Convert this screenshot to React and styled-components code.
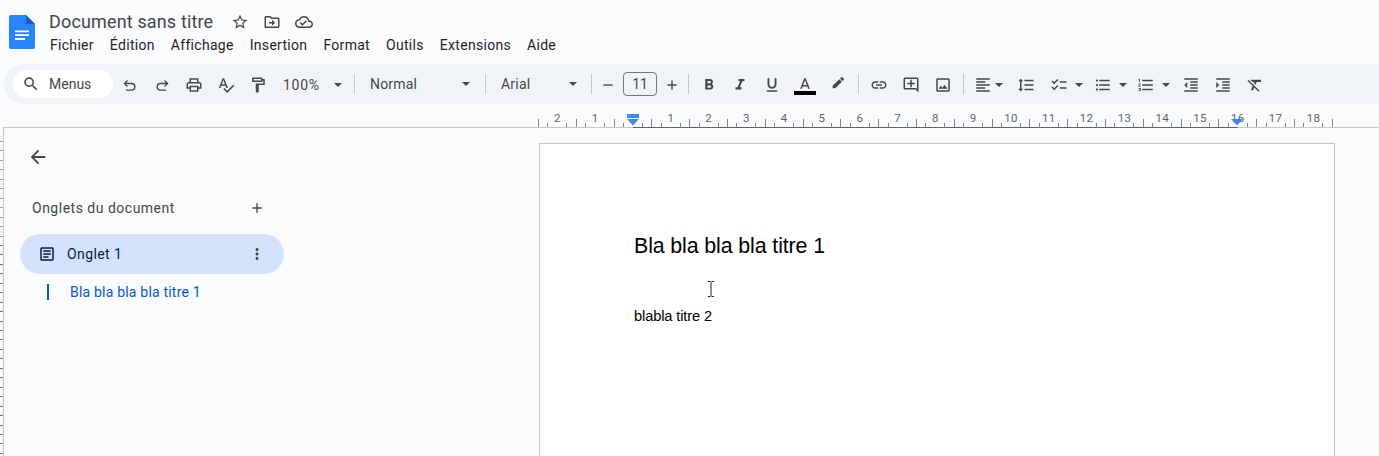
import React from 'react';
import styled, { createGlobalStyle } from 'styled-components';

const GlobalStyle = createGlobalStyle`
  html, body {
    margin: 0;
    padding: 0;
    background: #f9fbfd;
    overflow: hidden;
  }
  * { box-sizing: border-box; }
`;

const ICONS = {
  search: 'M15.5 14h-.79l-.28-.27A6.471 6.471 0 0 0 16 9.5 6.5 6.5 0 1 0 9.5 16c1.61 0 3.09-.59 4.23-1.57l.27.28v.79l5 4.99L20.49 19l-4.99-5zm-6 0C7.01 14 5 11.99 5 9.5S7.01 5 9.5 5 14 7.01 14 9.5 11.99 14 9.5 14z',
  print: 'M19 8h-1V3H6v5H5c-1.66 0-3 1.34-3 3v6h4v4h12v-4h4v-6c0-1.66-1.34-3-3-3zM8 5h8v3H8V5zm8 12v2H8v-4h8v2zm2-2v-2H6v2H4v-4c0-.55.45-1 1-1h14c.55 0 1 .45 1 1v4h-2z',
  spell: 'M12.45 16h2.09L9.43 3H7.57L2.46 16h2.09l1.12-3h5.64l1.14 3zm-6.02-5L8.5 5.48 10.57 11H6.43zm15.16.59l-8.09 8.09L9.83 16l-1.41 1.41 5.09 5.09L23 13l-1.41-1.41z',
  paint: 'M18 4V3c0-.55-.45-1-1-1H5c-.55 0-1 .45-1 1v4c0 .55.45 1 1 1h12c.55 0 1-.45 1-1V6h1v4H9v11c0 .55.45 1 1 1h2c.55 0 1-.45 1-1v-9h8V4h-3zm-2 2H6V4h10v2z',
  star: 'M22 9.24l-7.19-.62L12 2 9.19 8.63 2 9.24l5.46 4.73L5.82 21 12 17.27 18.18 21l-1.63-7.03L22 9.24zM12 15.4l-3.76 2.27 1-4.28-3.32-2.88 4.38-.38L12 6.1l1.71 4.04 4.38.38-3.32 2.88 1 4.28L12 15.4z',
  move: 'M20 6h-8l-2-2H4c-1.1 0-1.99.9-1.99 2L2 18c0 1.1.9 2 2 2h16c1.1 0 2-.9 2-2V8c0-1.1-.9-2-2-2zm0 12H4V6h5.17l2 2H20v10zm-8-4H8v-2h4V9l4 4-4 4v-3z',
  cloud: 'M19.35 10.04C18.67 6.59 15.64 4 12 4 9.11 4 6.6 5.64 5.35 8.04 2.34 8.36 0 10.91 0 14c0 3.31 2.69 6 6 6h13c2.76 0 5-2.24 5-5 0-2.64-2.05-4.78-4.65-4.96zM19 18H6c-2.21 0-4-1.79-4-4 0-2.05 1.53-3.76 3.56-3.97l1.07-.11.5-.95C8.08 7.14 9.94 6 12 6c2.62 0 4.88 1.86 5.39 4.43l.3 1.5 1.53.11c1.56.1 2.78 1.41 2.78 2.96 0 1.65-1.35 3-3 3zm-9-3.82l-2.09-2.09L6.5 13.5 10 17l6.01-6.01-1.41-1.41z',
  bold: 'M15.6 10.79c.97-.67 1.65-1.77 1.65-2.79 0-2.26-1.75-4-4-4H7v14h7.04c2.09 0 3.71-1.7 3.71-3.79 0-1.52-.86-2.82-2.15-3.42zM10 6.5h3c.83 0 1.5.67 1.5 1.5s-.67 1.5-1.5 1.5h-3v-3zm3.5 9H10v-3h3.5c.83 0 1.5.67 1.5 1.5s-.67 1.5-1.5 1.5z',
  italic: 'M10 4v3h2.21l-3.42 8H6v3h8v-3h-2.21l3.42-8H18V4z',
  underline: 'M12 17c3.31 0 6-2.69 6-6V3h-2.5v8c0 1.93-1.57 3.5-3.5 3.5S8.5 12.93 8.5 11V3H6v8c0 3.31 2.69 6 6 6zm-7 2v2h14v-2H5z',
  textColor: 'M11 3L5.5 17h2.25l1.12-3h6.25l1.12 3h2.25L13 3h-2zm-1.38 9L12 5.67 14.38 12H9.62z',
  pen: 'M17.75 7L14 3.25l-10 10V17h3.75l10-10zm2.96-2.96c.39-.39.39-1.02 0-1.41L18.37.29c-.39-.39-1.02-.39-1.41 0L15 2.25 18.75 6l1.96-1.96z',
  link: 'M3.9 12c0-1.71 1.39-3.1 3.1-3.1h4V7H7c-2.76 0-5 2.24-5 5s2.24 5 5 5h4v-1.9H7c-1.71 0-3.1-1.39-3.1-3.1zM8 13h8v-2H8v2zm9-6h-4v1.9h4c1.71 0 3.1 1.39 3.1 3.1s-1.39 3.1-3.1 3.1h-4V17h4c2.76 0 5-2.24 5-5s-2.24-5-5-5z',
  comment: 'M22 4c0-1.1-.9-2-2-2H4c-1.1 0-2 .9-2 2v12c0 1.1.9 2 2 2h14l4 4V4zm-2 13.17L18.83 16H4V4h16v13.17zM13 5h-2v4H7v2h4v4h2v-4h4V9h-4z',
  image: 'M19 5v14H5V5h14m0-2H5c-1.1 0-2 .9-2 2v14c0 1.1.9 2 2 2h14c1.1 0 2-.9 2-2V5c0-1.1-.9-2-2-2zm-4.86 8.86l-3 3.87L9 13.14 6 17h12l-3.86-5.14z',
  align: 'M15 15H3v2h12v-2zm0-8H3v2h12V7zM3 13h18v-2H3v2zm0 8h18v-2H3v2zM3 3v2h18V3H3z',
  spacing: 'M6 7h2.5L5 3.5 1.5 7H4v10H1.5L5 20.5 8.5 17H6V7zm4-2v2h12V5H10zm0 14h12v-2H10v2zm0-6h12v-2H10v2z',
  checklist: 'M22 7h-9v2h9V7zm0 8h-9v2h9v-2zM5.54 11L2 7.46l1.41-1.41 2.12 2.12 4.24-4.24 1.41 1.41L5.54 11zm0 8L2 15.46l1.41-1.41 2.12 2.12 4.24-4.24 1.41 1.41L5.54 19z',
  bullets: 'M4 10.5c-.83 0-1.5.67-1.5 1.5s.67 1.5 1.5 1.5 1.5-.67 1.5-1.5-.67-1.5-1.5-1.5zm0-6c-.83 0-1.5.67-1.5 1.5S3.17 7.5 4 7.5 5.5 6.83 5.5 6 4.83 4.5 4 4.5zm0 12c-.83 0-1.5.68-1.5 1.5s.68 1.5 1.5 1.5 1.5-.68 1.5-1.5-.67-1.5-1.5-1.5zM7 19h14v-2H7v2zm0-6h14v-2H7v2zm0-8v2h14V5H7z',
  numbers: 'M2 17h2v.5H3v1h1v.5H2v1h3v-4H2v1zm1-9h1V4H2v1h1v3zm-1 3h1.8L2 13.1v.9h3v-1H3.2L5 10.9V10H2v1zm5-6v2h14V5H7zm0 14h14v-2H7v2zm0-6h14v-2H7v2z',
  outdent: 'M11 17h10v-2H11v2zm-8-5l4 4V8l-4 4zm0 9h18v-2H3v2zM3 3v2h18V3H3zm8 6h10V7H11v2zm0 4h10v-2H11v2z',
  indent: 'M3 21h18v-2H3v2zM3 8v8l4-4-4-4zm8 9h10v-2H11v2zM3 3v2h18V3H3zm8 6h10V7H11v2zm0 4h10v-2H11v2z',
  clear: 'M3.27 5L2 6.27l6.97 6.97L6.5 19h3l1.57-3.66L16.73 21 18 19.73 3.55 5.27 3.27 5zM6 5v.18L8.82 8h2.4l-.72 1.68 2.1 2.1L14.21 8H20V5H6z',
  back: 'M20 11H7.83l5.59-5.59L12 4l-8 8 8 8 1.41-1.41L7.83 13H20v-2z',
  plus: 'M19 13h-6v6h-2v-6H5v-2h6V5h2v6h6v2z',
  minus: 'M19 13H5v-2h14v2z',
  more: 'M12 8c1.1 0 2-.9 2-2s-.9-2-2-2-2 .9-2 2 .9 2 2 2zm0 2c-1.1 0-2 .9-2 2s.9 2 2 2 2-.9 2-2-.9-2-2-2zm0 6c-1.1 0-2 .9-2 2s.9 2 2 2 2-.9 2-2-.9-2-2-2z',
  article: 'M19 5v14H5V5h14m0-2H5c-1.1 0-2 .9-2 2v14c0 1.1.9 2 2 2h14c1.1 0 2-.9 2-2V5c0-1.1-.9-2-2-2zM14 17H7v-2h7v2zm3-4H7v-2h10v2zm0-4H7V7h10v2z',
};

const Icon = ({ name, size = 18, color = '#444746' }) => (
  <svg width={size} height={size} viewBox="0 0 24 24" fill={color} style={{ display: 'block', flexShrink: 0 }}>
    <path d={ICONS[name]} />
  </svg>
);

const HookArrow = ({ flip }) => (
  <svg width="18" height="18" viewBox="0 0 18 18" fill="none" stroke="#444746" strokeWidth="1.4" style={{ display: 'block', transform: flip ? 'scaleX(-1)' : 'none' }}>
    <path d="M6.5 4.5L3.5 7.5L6.5 10.5" />
    <path d="M3.5 7.5H10.5a3.3 3.3 0 0 1 0 6.6H5" />
  </svg>
);

const DocsLogo = () => (
  <svg width="26" height="34" viewBox="0 0 26 34" style={{ display: 'block' }}>
    <path d="M2 0H17L26 9V32a2 2 0 0 1-2 2H2a2 2 0 0 1-2-2V2a2 2 0 0 1 2-2z" fill="#2684fc" />
    <path d="M17 0L26 9H17z" fill="#1a5fc8" />
    <path d="M6 15.5H20V17.3H6zM6 19.3H20V21.1H6zM6 23.1H16V24.9H6z" fill="#fff" />
  </svg>
);

const Page = styled.div`
  width: 1379px;
  height: 456px;
  overflow: hidden;
  position: relative;
  background: #f9fbfd;
  font-family: Roboto, "Liberation Sans", sans-serif;
`;

const Header = styled.header`
  height: 64px;
  display: flex;
  padding: 15px 0 0 9px;
  gap: 14px;
`;

const TitleBlock = styled.div`
  display: flex;
  flex-direction: column;
`;

const TitleRow = styled.div`
  display: flex;
  align-items: center;
  height: 16px;
  margin-top: -1px;
`;

const DocTitle = styled.span`
  font-size: 18px;
  color: #444746;
  letter-spacing: 0.15px;
  line-height: 16px;
  width: 175px;
  white-space: nowrap;
`;

const TitleIcon = styled.span`
  width: 32px;
  display: flex;
  justify-content: center;
`;

const MenuBar = styled.nav`
  display: flex;
  gap: 16px;
  margin-top: 7px;
  margin-left: 1px;
`;

const MenuItem = styled.span`
  font-size: 14px;
  line-height: 16px;
  color: #1f1f1f;
  letter-spacing: 0.3px;
  white-space: nowrap;
`;

const Toolbar = styled.div`
  height: 40px;
  margin-left: 4px;
  padding-left: 9px;
  display: flex;
  align-items: center;
  background: #f0f4f9;
  border-radius: 20px 0 0 20px;
`;

const SearchPill = styled.div`
  width: 100px;
  height: 28px;
  margin-right: 1px;
  padding-left: 9px;
  display: flex;
  align-items: center;
  gap: 9px;
  background: #fff;
  border-radius: 14px;
  font-size: 14px;
  color: #444746;
`;

const ToolButton = styled.div`
  width: ${(p) => p.$w || 32}px;
  height: 28px;
  padding-top: 1px;
  display: flex;
  align-items: center;
  justify-content: center;
  flex-shrink: 0;
`;

const DropButton = styled(ToolButton)`
  justify-content: flex-start;
  padding-left: ${(p) => p.$pl}px;
`;

const Select = styled.div`
  width: ${(p) => p.$w}px;
  height: 28px;
  padding: ${(p) => p.$pt || 0}px ${(p) => p.$pr}px 0 ${(p) => p.$pl}px;
  display: flex;
  align-items: center;
  justify-content: space-between;
  font-size: 14px;
  letter-spacing: ${(p) => p.$ls || 0.2}px;
  color: #444746;
  flex-shrink: 0;
`;

const Caret = styled.span`
  width: 0;
  height: 0;
  flex-shrink: 0;
  border-left: 4.5px solid transparent;
  border-right: 4.5px solid transparent;
  border-top: 4.5px solid #444746;
`;

const ToolCaret = styled(Caret)`
  margin-left: ${(p) => p.$gap}px;
`;

const Separator = styled.span`
  width: 1px;
  height: 20px;
  margin: 0 4px;
  background: #c7c7c7;
  flex-shrink: 0;
`;

const SizeBox = styled.div`
  width: 34px;
  height: 24px;
  margin: 0 3px;
  border: 1px solid #747775;
  border-radius: 4px;
  display: flex;
  align-items: center;
  justify-content: center;
  font-size: 14px;
  color: #444746;
  flex-shrink: 0;
`;

const ColorA = styled.div`
  display: flex;
  flex-direction: column;
  align-items: center;
  padding-top: 1px;
`;

const ColorBar = styled.span`
  width: 22px;
  height: 4px;
  margin-top: -3px;
  background: #000;
`;

const RulerBar = styled.div`
  height: 23px;
  margin: 1px 0 0 3px;
`;

const Main = styled.main`
  display: flex;
  height: 328px;
`;

const SideRuler = styled.div`
  width: 4px;
  flex-shrink: 0;
`;

const Sidebar = styled.aside`
  width: 535px;
  flex-shrink: 0;
  padding: 20px 0 0 16px;
`;

const BackButton = styled.div`
  width: 24px;
  height: 18px;
  margin-bottom: 33px;
  margin-left: 6px;
  display: flex;
  align-items: center;
  justify-content: center;
`;

const TabsHeader = styled.div`
  width: 264px;
  display: flex;
  align-items: center;
  justify-content: space-between;
  padding: 0 19px 0 12px;
  height: 18px;
  margin-bottom: 17px;
`;

const TabsTitle = styled.span`
  font-size: 14px;
  font-weight: 400;
  color: #444746;
  letter-spacing: 0.5px;
`;

const TabRow = styled.div`
  width: 264px;
  height: 40px;
  display: flex;
  align-items: center;
  padding: 0 18px 0 18px;
  gap: 11px;
  background: #d3e3fd;
  border-radius: 20px;
  font-size: 14px;
  font-weight: 400;
  letter-spacing: 0.4px;
  color: #041e49;
`;

const TabLabel = styled.span`
  flex: 1;
`;

const OutlineItem = styled.div`
  display: flex;
  align-items: center;
  height: 16px;
  margin: 10px 0 0 27px;
  gap: 21px;
  font-size: 14px;
  letter-spacing: 0.2px;
  color: #0b57d0;
`;

const OutlineBar = styled.span`
  width: 2px;
  height: 16px;
  background: #0b57d0;
`;

const DocPage = styled.section`
  width: 796px;
  height: 340px;
  margin-top: 15px;
  padding: 90px 0 0 94px;
  background: #fff;
  border: 1px solid #c7c7c7;
  font-family: "Liberation Sans", Arial, sans-serif;
  color: #000;
`;

const DocHeading = styled.h1`
  margin: 0;
  font-size: 21.33px;
  font-weight: 400;
  line-height: 24px;
  letter-spacing: -0.1px;
`;

const DocSubheading = styled.h2`
  margin: 49px 0 0;
  font-size: 14.67px;
  font-weight: 400;
  line-height: 18px;
  letter-spacing: -0.13px;
`;

const TextCursor = styled.svg`
  position: absolute;
  left: 707px;
  top: 281px;
`;

const CM = 37.8;
const ZERO = 630; // ruler svg starts at x=3

const Ruler = () => {
  const labels = [];
  const ticks = [];
  for (let n = -2; n <= 18; n++) {
    if (n !== 0) {
      labels.push(
        <text key={n} x={ZERO + n * CM} y="17" textAnchor="middle" fontSize="11.5" letterSpacing="0.3" fontFamily="Roboto, sans-serif" fill="#5f6368">
          {Math.abs(n)}
        </text>
      );
    }
  }
  for (let q = -10; q <= 74; q++) {
    if (q % 4 === 0) continue;
    const x = Math.round(ZERO + (q * CM) / 4 - 0.5) + 0.5;
    ticks.push(<line key={q} x1={x} x2={x} y1={q % 2 === 0 ? 14 : 18} y2="22" stroke="#80868b" />);
  }
  return (
    <svg width="1376" height="23" style={{ display: 'block' }}>
      <line x1="0" x2="1376" y1="22.5" y2="22.5" stroke="#c7c7c7" />
      <line x1={ZERO} x2={ZERO + 16 * CM} y1="22.5" y2="22.5" stroke="#5f6368" />
      {ticks}
      {labels}
      <rect x="624" y="9" width="12" height="4" fill="#4285f4" />
      <path d="M624 14H636L630 20.5z" fill="#4285f4" />
      <path d="M1228 14H1240L1234 20.5z" fill="#4285f4" />
    </svg>
  );
};

const LeftRuler = () => {
  const ticks = [];
  for (let i = 0; i < 35; i++) {
    const y = Math.round(13 + i * 9.45) + 0.5;
    ticks.push(<line key={i} x1="0" x2="3" y1={y} y2={y} stroke={y > 110 ? '#70757a' : '#9aa0a6'} />);
  }
  return (
    <svg width="4" height="328" style={{ display: 'block' }}>
      <line x1="3.5" x2="3.5" y1="0" y2="328" stroke="#c7c7c7" />
      {ticks}
    </svg>
  );
};

const App = () => (
  <Page>
    <GlobalStyle />
    <Header>
      <DocsLogo />
      <TitleBlock>
        <TitleRow>
          <DocTitle>Document sans titre</DocTitle>
          <TitleIcon><Icon name="star" /></TitleIcon>
          <TitleIcon><Icon name="move" /></TitleIcon>
          <TitleIcon><Icon name="cloud" /></TitleIcon>
        </TitleRow>
        <MenuBar>
          {['Fichier', 'Édition', 'Affichage', 'Insertion', 'Format', 'Outils', 'Extensions', 'Aide'].map((m) => (
            <MenuItem key={m}>{m}</MenuItem>
          ))}
        </MenuBar>
      </TitleBlock>
    </Header>

    <Toolbar>
      <SearchPill>
        <Icon name="search" />
        Menus
      </SearchPill>
      <ToolButton><HookArrow /></ToolButton>
      <ToolButton><HookArrow flip /></ToolButton>
      <ToolButton><Icon name="print" /></ToolButton>
      <ToolButton><Icon name="spell" /></ToolButton>
      <ToolButton><Icon name="paint" /></ToolButton>
      <Select $w={76} $pl={9} $pr={8} $ls={0.7} $pt={1}>100%<Caret /></Select>
      <Separator />
      <Select $w={122} $pl={11} $pr={11}>Normal<Caret /></Select>
      <Separator />
      <Select $w={97} $pl={11} $pr={10}>Arial<Caret /></Select>
      <Separator />
      <ToolButton $w={24}><Icon name="minus" size={16} /></ToolButton>
      <SizeBox>11</SizeBox>
      <ToolButton $w={24}><Icon name="plus" size={16} /></ToolButton>
      <Separator />
      <ToolButton $w={31}><Icon name="bold" /></ToolButton>
      <ToolButton><Icon name="italic" /></ToolButton>
      <ToolButton><Icon name="underline" /></ToolButton>
      <ToolButton $w={34}>
        <ColorA>
          <Icon name="textColor" />
          <ColorBar />
        </ColorA>
      </ToolButton>
      <ToolButton $w={32}><Icon name="pen" size={16} /></ToolButton>
      <Separator />
      <ToolButton><Icon name="link" /></ToolButton>
      <ToolButton><Icon name="comment" /></ToolButton>
      <ToolButton><Icon name="image" /></ToolButton>
      <Separator />
      <DropButton $w={41} $pl={6}><Icon name="align" /><ToolCaret $gap={3} /></DropButton>
      <ToolButton $w={34}><Icon name="spacing" /></ToolButton>
      <DropButton $w={48} $pl={7}><Icon name="checklist" /><ToolCaret $gap={7} /></DropButton>
      <DropButton $w={40} $pl={3}><Icon name="bullets" /><ToolCaret $gap={7} /></DropButton>
      <DropButton $w={44} $pl={6}><Icon name="numbers" /><ToolCaret $gap={7} /></DropButton>
      <ToolButton><Icon name="outdent" /></ToolButton>
      <ToolButton><Icon name="indent" /></ToolButton>
      <ToolButton><Icon name="clear" /></ToolButton>
    </Toolbar>

    <RulerBar><Ruler /></RulerBar>

    <Main>
      <SideRuler><LeftRuler /></SideRuler>
      <Sidebar>
        <BackButton><Icon name="back" size={22} /></BackButton>
        <TabsHeader>
          <TabsTitle>Onglets du document</TabsTitle>
          <Icon name="plus" size={16} />
        </TabsHeader>
        <TabRow>
          <Icon name="article" color="#041e49" />
          <TabLabel>Onglet 1</TabLabel>
          <Icon name="more" />
        </TabRow>
        <OutlineItem>
          <OutlineBar />
          Bla bla bla bla titre 1
        </OutlineItem>
      </Sidebar>
      <DocPage>
        <DocHeading>Bla bla bla bla titre 1</DocHeading>
        <DocSubheading>blabla titre 2</DocSubheading>
      </DocPage>
    </Main>

    <TextCursor width="8" height="16" viewBox="0 0 8 16" fill="none" stroke="#222">
      <path d="M1 .5H3.5M4.5 .5H7M4 1V15M1 15.5H3.5M4.5 15.5H7" />
    </TextCursor>
  </Page>
);

export default App;
